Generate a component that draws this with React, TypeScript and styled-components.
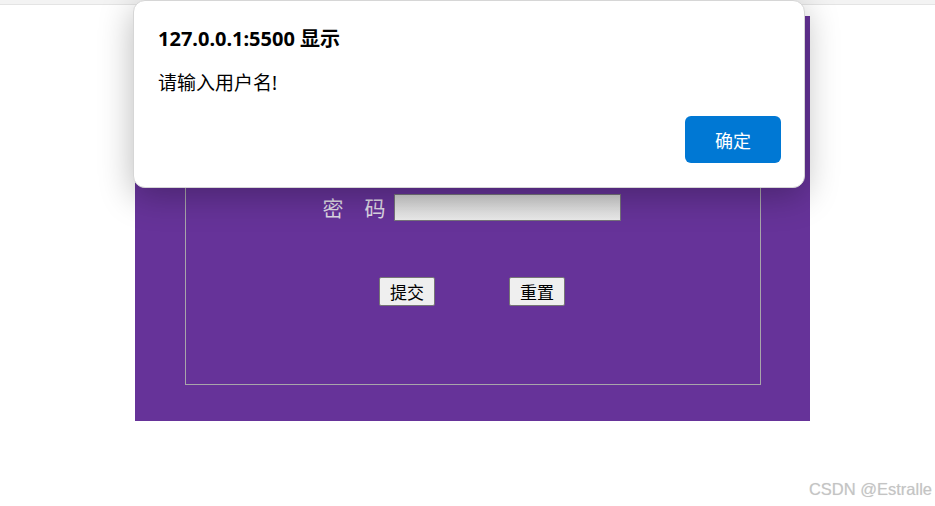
import React, { useState } from "react";
import styled, { createGlobalStyle } from "styled-components";

const GlobalStyle = createGlobalStyle`
  html, body {
    margin: 0;
    padding: 0;
    background: #ffffff;
  }
  body {
    font-family: "Noto Sans", "Noto Sans CJK SC", sans-serif;
  }
`;

function App() {
  const [username, setUsername] = useState("");
  const [password, setPassword] = useState("");
  const [showAlert, setShowAlert] = useState(true);

  return (
    <Page>
      <GlobalStyle />
      <TopStrip />

      <Panel>
        <FieldBox>
          <Row>
            <Label>
              <span>用</span>
              <span>户</span>
            </Label>
            <Input
              type="text"
              value={username}
              onChange={(e) => setUsername(e.target.value)}
            />
          </Row>
          <Row $top={16}>
            <Label>
              <span>密</span>
              <span>码</span>
            </Label>
            <Input
              type="password"
              value={password}
              onChange={(e) => setPassword(e.target.value)}
            />
          </Row>
          <ButtonRow>
            <FormButton onClick={() => setShowAlert(true)}>提交</FormButton>
            <FormButton
              onClick={() => {
                setUsername("");
                setPassword("");
              }}
            >
              重置
            </FormButton>
          </ButtonRow>
        </FieldBox>
      </Panel>

      {showAlert && (
        <Dialog>
          <DialogTitle>127.0.0.1:5500 显示</DialogTitle>
          <DialogText>请输入用户名!</DialogText>
          <DialogFooter>
            <OkButton onClick={() => setShowAlert(false)}>确定</OkButton>
          </DialogFooter>
        </Dialog>
      )}

      <Watermark>CSDN @Estralle</Watermark>
    </Page>
  );
}

const Page = styled.div`
  position: relative;
  width: 935px;
  height: 506px;
  overflow: hidden;
`;

const TopStrip = styled.div`
  height: 4px;
  background: #f3f3f3;
  border-bottom: 1px solid #e4e4e4;
`;

const Panel = styled.div`
  width: 675px;
  height: 405px;
  margin: 11px 0 0 135px;
  padding-top: 40px;
  box-sizing: border-box;
  background: #663399;
`;

const FieldBox = styled.div`
  margin: 0 49px 0 50px;
  padding-top: 94px;
  height: 329px;
  box-sizing: border-box;
  border: 1px solid #a8a6aa;
`;

const Row = styled.div<{ $top?: number }>`
  display: flex;
  align-items: center;
  justify-content: center;
  margin-top: ${(p) => p.$top ?? 0}px;
  margin-right: 3px;
`;

const Label = styled.label`
  display: inline-flex;
  gap: 21px;
  margin-right: 8px;
  font-family: "Noto Sans CJK SC", sans-serif;
  font-size: 21px;
  line-height: 27px;
  color: #ddd8e4;
`;

const Input = styled.input`
  width: 227px;
  height: 27px;
  box-sizing: border-box;
  border: 1px solid #76737a;
  background: linear-gradient(#d2d2d2, #ebebeb);
  outline: none;
  padding: 0 4px;
`;

const ButtonRow = styled.div`
  display: flex;
  justify-content: center;
  gap: 74px;
  margin-top: 56px;
  margin-right: 2px;
`;

const FormButton = styled.button`
  width: 56px;
  height: 29px;
  padding: 0;
  box-sizing: border-box;
  background: #efefef;
  border: 1px solid #767676;
  border-radius: 2px;
  font-family: "Noto Sans CJK SC", sans-serif;
  font-size: 17px;
  line-height: 25px;
  color: #000;
`;

const Dialog = styled.div`
  position: absolute;
  top: 0;
  left: 133px;
  width: 672px;
  height: 188px;
  box-sizing: border-box;
  padding: 24px 23px 24px 24px;
  background: #ffffff;
  border: 1px solid #d6d6d6;
  border-radius: 12px;
  box-shadow: 0 8px 34px rgba(0, 0, 0, 0.28);
  display: flex;
  flex-direction: column;
`;

const DialogTitle = styled.div`
  font-family: "Noto Sans", "Noto Sans CJK SC", sans-serif;
  font-weight: 700;
  font-size: 20px;
  line-height: 27px;
  color: #000;
`;

const DialogText = styled.div`
  margin-top: 18px;
  font-family: "Noto Sans", "Noto Sans CJK SC", sans-serif;
  font-size: 19px;
  line-height: 26px;
  color: #000;
`;

const DialogFooter = styled.div`
  margin-top: auto;
  display: flex;
  justify-content: flex-end;
`;

const OkButton = styled.button`
  width: 96px;
  height: 47px;
  border: none;
  border-radius: 6px;
  background: #0078d4;
  color: #ffffff;
  font-family: "Noto Sans CJK SC", sans-serif;
  font-size: 18px;
`;

const Watermark = styled.div`
  position: absolute;
  right: 3px;
  bottom: 7px;
  font-family: "Liberation Sans", sans-serif;
  font-size: 16.5px;
  color: #c4c4c4;
  text-shadow: 0 0 1px #e0e0e0;
`;

export default App;
